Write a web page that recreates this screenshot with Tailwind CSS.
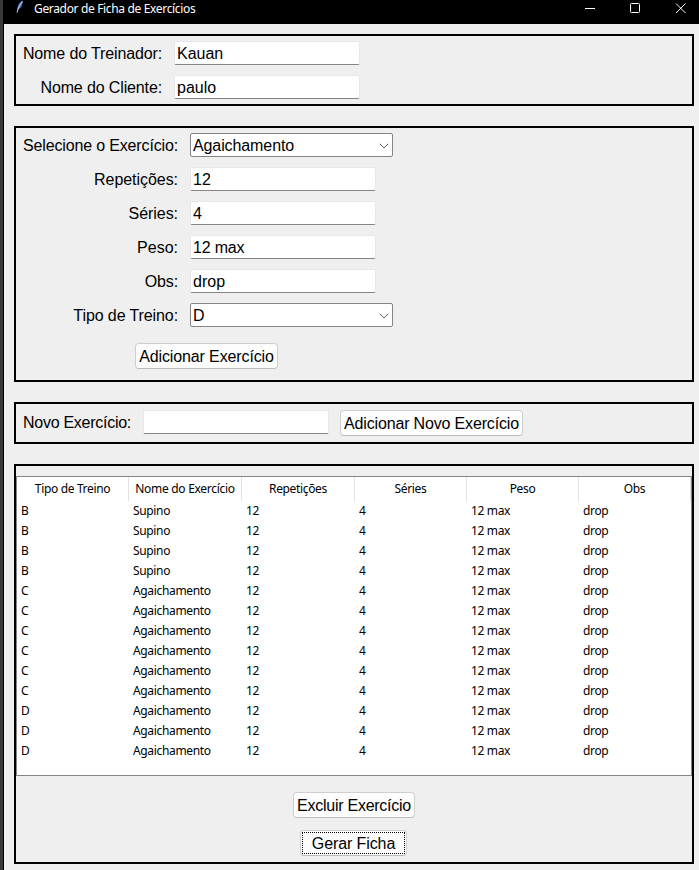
<!DOCTYPE html>
<html lang="pt-BR">
<head>
<meta charset="utf-8">
<title>Gerador de Ficha de Exercícios</title>
<script src="https://cdn.jsdelivr.net/npm/@tailwindcss/browser@4"></script>
</head>
<body class="w-[699px] h-[870px] overflow-hidden bg-[#3a3835] pl-[3px] text-black">
<div class="h-full border-l border-black bg-[#efefef] font-['Liberation_Sans',Arial,sans-serif] text-[16px] leading-6">
  <header class="h-6 bg-black text-white flex items-start pl-[10px]">
    <svg class="mt-0 w-4 h-4 shrink-0" viewBox="0 0 16 16" fill="none"><path d="M3.500 10.500C3 6.500 5 2 8.500 .5C9.200 4 7.500 8 4.500 9.500Z" fill="#3f6fae"/><path d="M3 12.500C4 8.500 5.500 5 8.500 1.500" stroke="#c9e1ff" stroke-width="1"/></svg>
    <span class="ml-1 w-[190px] whitespace-nowrap font-['Noto_Sans',sans-serif] text-[12px] leading-[18px] tracking-[-0.34px]">Gerador de Ficha de Exercícios</span>
    <svg class="ml-auto w-[115px] h-4 shrink-0" viewBox="0 0 115 16" fill="none" stroke="#fff"><path d="M1 8.500H11"/><rect x="46.500" y="3.500" width="9" height="9" rx="1"/><path d="M92 3.500L101.500 13M101.500 3.500L92 13"/></svg>
  </header>
  <main class="pl-[10px] pr-[5px] pt-[10px] flex flex-col gap-5">
    <section class="h-[72px] border-2 border-black grid grid-cols-[146px_186px] auto-rows-[34px] gap-x-[12px] items-center">
      <label class="text-right tracking-[-0.13px] pt-px">Nome do Treinador:</label>
      <div class="h-6 bg-white border border-[#e8e8e8] border-b-[#858585] rounded-[2px] pl-[2px] leading-[23px]">Kauan</div>
      <label class="text-right tracking-[-0.13px] pt-px">Nome do Cliente:</label>
      <div class="h-6 bg-white border border-[#e8e8e8] border-b-[#858585] rounded-[2px] pl-[2px] leading-[23px]">paulo</div>
    </section>
    <section class="h-[256px] border-2 border-black">
      <div class="grid grid-cols-[162px_203px] auto-rows-[34px] gap-x-[12px] items-center">
        <label class="text-right tracking-[-0.15px] pt-px">Selecione o Exercício:</label>
        <div class="h-6 bg-white border border-[#858585] rounded-[2px] pl-[2px] pr-[3px] leading-[23px] tracking-[-0.1px] flex justify-between items-center">Agaichamento<svg class="w-[10px] h-[6px] mt-[2px]" viewBox="0 0 10 6" fill="none" stroke="#666"><path d="M.8 .8L5 5L9.200 .8"/></svg></div>
        <label class="text-right tracking-[-0.05px] pt-px">Repetições:</label>
        <div class="h-6 w-[186px] bg-white border border-[#e8e8e8] border-b-[#858585] rounded-[2px] pl-[2px] leading-[23px]">12</div>
        <label class="text-right tracking-[-0.05px] pt-px">Séries:</label>
        <div class="h-6 w-[186px] bg-white border border-[#e8e8e8] border-b-[#858585] rounded-[2px] pl-[2px] leading-[23px]">4</div>
        <label class="text-right pt-px">Peso:</label>
        <div class="h-6 w-[186px] bg-white border border-[#e8e8e8] border-b-[#858585] rounded-[2px] pl-[2px] leading-[23px] tracking-[-0.2px]">12 max</div>
        <label class="text-right tracking-[-0.15px] pt-px">Obs:</label>
        <div class="h-6 w-[186px] bg-white border border-[#e8e8e8] border-b-[#858585] rounded-[2px] pl-[2px] leading-[23px]">drop</div>
        <label class="text-right tracking-[-0.1px] pt-px">Tipo de Treino:</label>
        <div class="h-6 bg-white border border-[#858585] rounded-[2px] pl-[2px] pr-[3px] leading-[23px] flex justify-between items-center">D<svg class="w-[10px] h-[6px] mt-[2px]" viewBox="0 0 10 6" fill="none" stroke="#666"><path d="M.8 .8L5 5L9.200 .8"/></svg></div>
      </div>
      <button class="block mt-[11px] ml-[119px] w-[143px] h-[26px] bg-[#fdfdfd] border border-[#cfcfcf] border-b-[#bbb] rounded whitespace-nowrap leading-6 pt-px tracking-[-0.12px]">Adicionar Exercício</button>
    </section>
    <section class="h-[42px] border-2 border-black flex items-start">
      <label class="w-[115px] mt-[7px] text-right whitespace-nowrap tracking-[-0.27px]">Novo Exercício:</label>
      <div class="h-6 w-[186px] ml-[12px] mt-[6px] bg-white border border-[#e8e8e8] border-b-[#858585] rounded-[2px]"></div>
      <button class="ml-[11px] mt-[6px] w-[183px] h-[26px] bg-[#fdfdfd] border border-[#cfcfcf] border-b-[#bbb] rounded whitespace-nowrap leading-6 pt-px tracking-[-0.16px]">Adicionar Novo Exercício</button>
    </section>
    <section class="h-[400px] border-2 border-black pt-[10px] flex flex-col items-center">
      <div class="w-full h-[300px] bg-white border border-[#858585] font-['Noto_Sans',sans-serif] text-[12px] tracking-[-0.34px]">
        <div class="grid grid-cols-[112px_113px_113px_112px_112px_112px] h-6 leading-6 text-center whitespace-nowrap">
          <span class="border-r border-[#e2e2e2]">Tipo de Treino</span>
          <span class="border-r border-[#e2e2e2] tracking-[-0.3px]">Nome do Exercício</span>
          <span class="border-r border-[#e2e2e2]">Repetições</span>
          <span class="border-r border-[#e2e2e2]">Séries</span>
          <span class="border-r border-[#e2e2e2]">Peso</span>
          <span class="border-r border-[#e2e2e2]">Obs</span>
        </div>
        <div id="rows"></div>
      </div>
      <button class="mt-4 w-[122px] h-[26px] shrink-0 bg-[#fdfdfd] border border-[#cfcfcf] border-b-[#bbb] rounded whitespace-nowrap leading-6 pt-px tracking-[-0.25px]">Excluir Exercício</button>
      <button class="mt-3 mr-px w-[107px] h-[26px] shrink-0 bg-[#fdfdfd] border border-[#cfcfcf] border-b-[#bbb] rounded p-px"><span class="block h-[22px] border border-dotted border-black leading-[22px] whitespace-nowrap tracking-[-0.1px]">Gerar Ficha</span></button>
    </section>
  </main>
</div>
<script>
const names = { B: 'Supino', C: 'Agaichamento', D: 'Agaichamento' };
document.getElementById('rows').innerHTML = [...'BBBBCCCCCCDDD'].map(t =>
  `<div class="grid grid-cols-[112px_113px_113px_112px_112px_112px] h-5 leading-5 whitespace-nowrap">${
    [t, names[t], '12', '4', '12 max', 'drop'].map(v => `<span class="pl-1">${v}</span>`).join('')}</div>`).join('');
</script>
</body>
</html>
